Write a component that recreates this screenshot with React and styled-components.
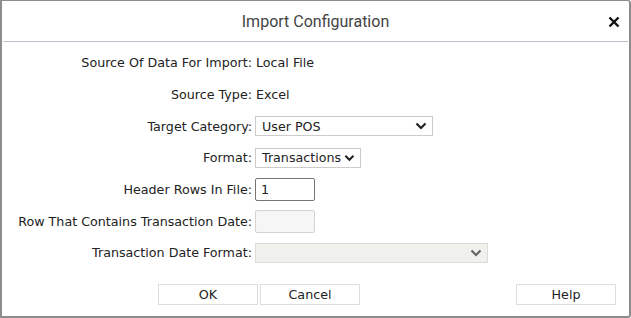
import styled, { createGlobalStyle } from "styled-components"

const Global = createGlobalStyle`
    html, body {
        margin: 0;
        padding: 0;
        background: #ffffff;
    }
`

const Chevron = ({ color = "#222" }) => (
    <svg width="12" height="8" viewBox="0 0 12 8">
        <path d="M1.5 1.5 L6 6 L10.5 1.5" fill="none" stroke={color} strokeWidth="2.2" />
    </svg>
)

const CloseIcon = () => (
    <svg width="12" height="12" viewBox="0 0 12 12">
        <path d="M1.5 1.5 L10.5 10.5 M10.5 1.5 L1.5 10.5" stroke="#111" strokeWidth="2.4" />
    </svg>
)

const rows = [
    { label: "Source Of Data For Import:", text: "Local File" },
    { label: "Source Type:", text: "Excel" },
    { label: "Target Category:", select: "User POS", width: 178 },
    { label: "Format:", select: "Transactions", width: 106, tight: true },
    { label: "Header Rows In File:", input: "1" },
    { label: "Row That Contains Transaction Date:", input: "", disabled: true },
    { label: "Transaction Date Format:", select: "", width: 233, disabled: true },
]

const App = () => {
    return (
        <>
            <Global />
            <Dialog>
                <Header>
                    <Title>Import Configuration</Title>
                    <Close><CloseIcon /></Close>
                </Header>
                <Form>
                    {rows.map((row) => (
                        <Row key={row.label}>
                            <Label>{row.label}</Label>
                            {row.text && <Value>{row.text}</Value>}
                            {row.select !== undefined && (
                                <SelectBox $width={row.width} $disabled={row.disabled} $tight={row.tight}>
                                    <span>{row.select}</span>
                                    <Chevron color={row.disabled ? "#666" : "#222"} />
                                </SelectBox>
                            )}
                            {row.input !== undefined && (
                                <InputBox $disabled={row.disabled}>{row.input}</InputBox>
                            )}
                        </Row>
                    ))}
                </Form>
                <Footer>
                    <Button>OK</Button>
                    <Button>Cancel</Button>
                    <Spacer />
                    <Button>Help</Button>
                </Footer>
            </Dialog>
        </>
    )
}

export default App

const Dialog = styled.div`
    width: 631px;
    height: 318px;
    box-sizing: border-box;
    border: 2px solid #8d8d8d;
    border-top-width: 1px;
    border-radius: 0 3px 3px 0;
    background: #fff;
    display: flex;
    flex-direction: column;
    font-family: "DejaVu Sans", Verdana, sans-serif;
    font-size: 12.7px;
    color: #222;
`
const Header = styled.div`
    height: 40px;
    margin: 0 1px;
    border-bottom: 1px solid #b9c1ca;
    position: relative;
    display: flex;
    align-items: center;
    justify-content: center;
`
const Title = styled.div`
    font-family: Roboto, "Liberation Sans", sans-serif;
    font-size: 16px;
    color: #444;
    margin-top: 1px;
`
const Close = styled.div`
    position: absolute;
    right: 8px;
    top: 15px;
    display: flex;
`
const Form = styled.div`
    display: flex;
    flex-direction: column;
    padding-top: 5px;
`
const Row = styled.div`
    display: grid;
    grid-template-columns: 250px auto;
    column-gap: 3px;
    align-items: center;
    justify-items: start;
    height: 31.67px;
`
const Label = styled.div`
    justify-self: end;
    white-space: nowrap;
`
const Value = styled.div`
    margin-left: 1px;
`
const SelectBox = styled.div`
    box-sizing: border-box;
    width: ${(p) => p.$width}px;
    height: 20px;
    border: 1px solid ${(p) => (p.$disabled ? "#dcdcd8" : "#cccccc")};
    background: ${(p) => (p.$disabled ? "#f0f0ec" : "#fff")};
    display: flex;
    align-items: center;
    justify-content: ${(p) => (p.$tight ? "flex-start" : "space-between")};
    gap: 3px;
    padding: 0 5px 0 6px;
    white-space: nowrap;
`
const InputBox = styled.div`
    box-sizing: border-box;
    width: 60px;
    height: 23px;
    border: 1px solid ${(p) => (p.$disabled ? "#d4d4d4" : "#767676")};
    border-radius: 2px;
    background: ${(p) => (p.$disabled ? "#f6f6f6" : "#fff")};
    display: flex;
    align-items: center;
    padding: 0 5px;
`
const Footer = styled.div`
    display: flex;
    gap: 2px;
    padding: 15px 13px 0 156px;
`
const Spacer = styled.div`
    flex: 1;
`
const Button = styled.div`
    box-sizing: border-box;
    width: 100px;
    height: 21px;
    border: 1px solid #dddddd;
    background: #fff;
    display: flex;
    align-items: center;
    justify-content: center;
`
